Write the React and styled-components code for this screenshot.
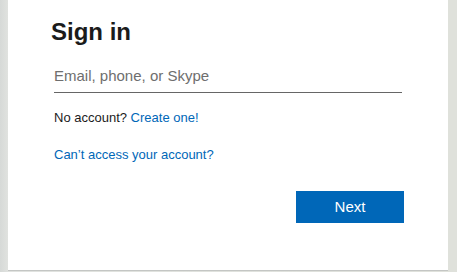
import React from "react";
import styled, { createGlobalStyle } from "styled-components";

const Global = createGlobalStyle`
  html, body {
    margin: 0;
    padding: 0;
    background: #dcdfdb;
    font-family: "Liberation Sans", Arial, Helvetica, sans-serif;
  }
  * { box-sizing: border-box; }
`;

const Page = styled.div`
  width: 457px;
  height: 272px;
  padding-left: 8px;
  background: linear-gradient(90deg, #d6d9d7 0, #e0e2df 8px, #dfe1db 100%);
`;

const Card = styled.main`
  width: 440px;
  height: 271px;
  background: #ffffff;
  border-bottom: 1px solid #c4c6c4;
  padding: 18px 46px 0 46px;
  display: flex;
  flex-direction: column;
`;

const Title = styled.h1`
  margin: 0 0 0 -3px;
  font-size: 24px;
  line-height: 28px;
  font-weight: 700;
  color: #1b1b1b;
`;

const Field = styled.input`
  margin-top: 19px;
  width: 100%;
  border: none;
  border-bottom: 1px solid #666666;
  padding: 0 0 7px 0;
  font-family: inherit;
  font-size: 15px;
  line-height: 20px;
  height: 28px;
  color: #1b1b1b;
  background: transparent;
  outline: none;
  &::placeholder {
    color: #6e6e6e;
  }
`;

const Line = styled.p`
  margin: ${(p) => p.$top}px 0 0 0;
  font-size: 13px;
  line-height: 16px;
  color: #1b1b1b;
`;

const Link = styled.a`
  color: #0067b8;
  text-decoration: none;
`;

const Next = styled.button`
  align-self: flex-end;
  margin: 28px -2px 0 0;
  width: 108px;
  height: 32px;
  border: none;
  background: #0067b8;
  color: #ffffff;
  font-family: inherit;
  font-size: 15px;
  line-height: 32px;
  padding: 0;
  cursor: pointer;
`;

export default function App() {
  return (
    <>
      <Global />
      <Page>
        <Card>
          <Title>Sign in</Title>
          <Field type="email" placeholder="Email, phone, or Skype" />
          <Line $top={17}>
            No account? <Link href="#">Create one!</Link>
          </Line>
          <Line $top={21}>
            <Link href="#">Can’t access your account?</Link>
          </Line>
          <Next>Next</Next>
        </Card>
      </Page>
    </>
  );
}
